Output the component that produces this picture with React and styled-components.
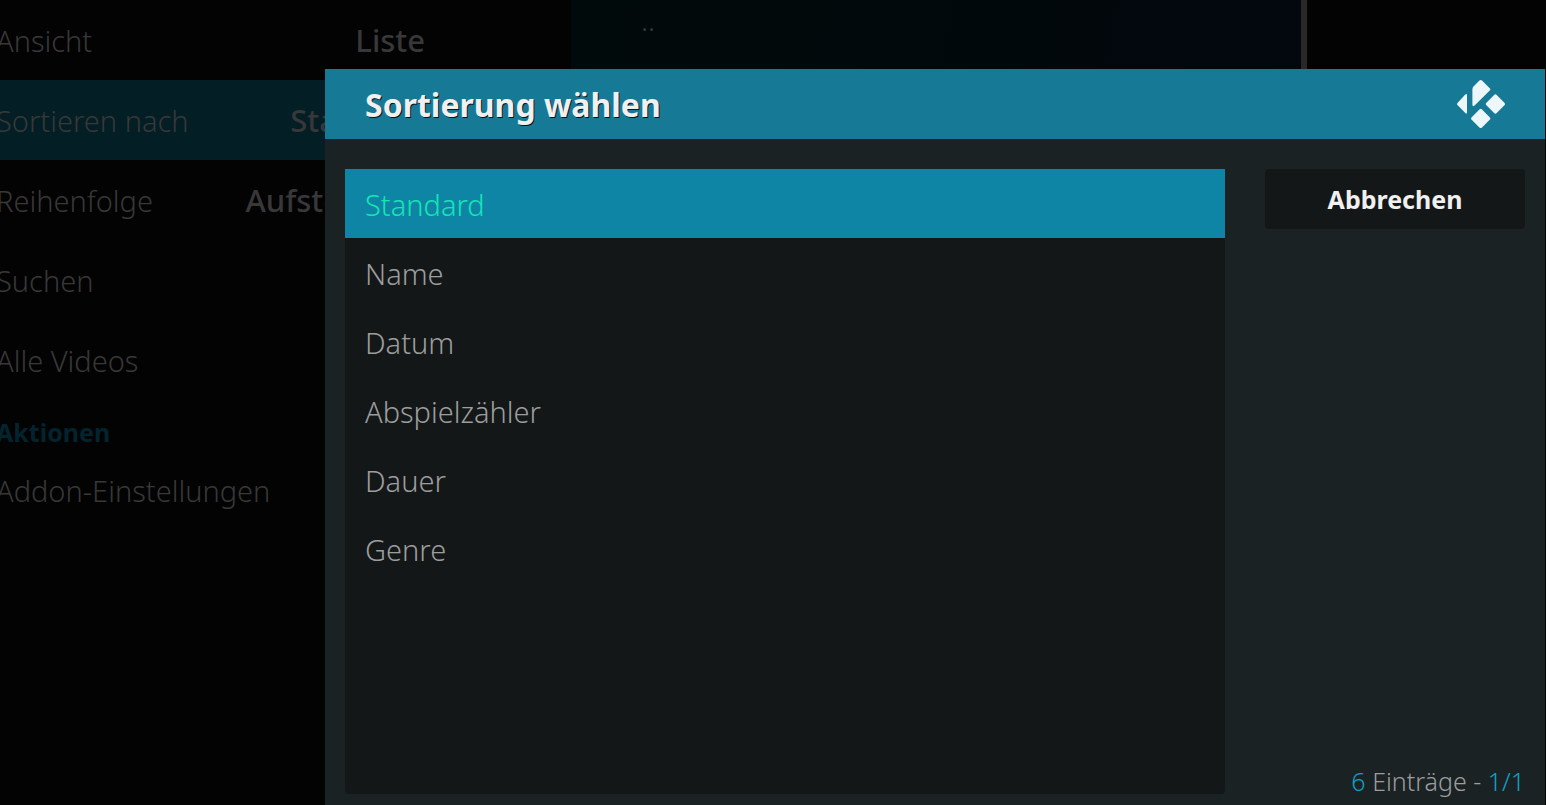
import React, { useState } from "react";
import styled, { createGlobalStyle, css } from "styled-components";

const GlobalStyle = createGlobalStyle`
  * {
    box-sizing: border-box;
  }

  body {
    margin: 0;
    background: #030303;
    font-family: "Noto Sans", sans-serif;
    overflow: hidden;
  }

  button {
    border: 0;
    font-family: inherit;
    cursor: pointer;
  }
`;

const Screen = styled.div`
  display: flex;
  min-height: 100vh;
  overflow: hidden;
`;

const Sidebar = styled.nav`
  flex: 0 0 469px;
  margin-left: -24px;
`;

const SidebarItem = styled.button`
  display: flex;
  justify-content: space-between;
  align-items: center;
  width: 100%;
  height: 80px;
  padding: 0 20px;
  background: ${({ $active }) => ($active ? "#031e25" : "transparent")};
  color: #383838;
  font-size: 29px;
  font-weight: 300;
`;

const SidebarValue = styled.span`
  font-size: 31px;
  font-weight: 500;
`;

const SidebarHeading = styled.h2`
  margin: 0;
  padding: 14px 20px 0;
  color: #03242f;
  font-size: 25px;
  font-weight: 700;
  line-height: 36px;
`;

const Media = styled.main`
  flex: 1;
  margin: 0 239px 0 126px;
  padding: 0 70px;
  border-right: 6px solid #282828;
  background: linear-gradient(100deg, #010a0b, #01080b 50%, #02070f);
  color: #383838;
  font-size: 29px;
  font-weight: 300;
  line-height: 40px;
`;

const Dialog = styled.section`
  position: fixed;
  top: 69px;
  right: 1px;
  bottom: 0;
  left: 325px;
  display: flex;
  flex-direction: column;
  background: #1b2223;
`;

const DialogHeader = styled.header`
  display: flex;
  justify-content: space-between;
  align-items: center;
  height: 70px;
  padding: 0 40px;
  background: #167a97;
`;

const DialogTitle = styled.h1`
  margin: 0;
  color: #f0f0f0;
  font-size: 32px;
  font-weight: 700;
  text-shadow: 1px 1px 0 #0b1316;
`;

const DialogBody = styled.div`
  display: flex;
  flex: 1;
  gap: 40px;
  padding: 30px 20px 11px;
`;

const OptionList = styled.div`
  flex: 1;
  border-radius: 4px;
  background: #141718;
`;

const Option = styled.button`
  display: block;
  width: 100%;
  height: 69px;
  padding: 2px 20px 0;
  background: transparent;
  color: #9c9d9d;
  font-size: 29px;
  font-weight: 300;
  text-align: left;

  ${({ $selected }) =>
    $selected &&
    css`
      background: #0f85a5;
      color: #14e6b4;
    `}
`;

const Actions = styled.aside`
  display: flex;
  flex: 0 0 260px;
  flex-direction: column;
  justify-content: space-between;
`;

const CancelButton = styled.button`
  height: 60px;
  border-radius: 4px;
  background: #141718;
  color: #f0f0f0;
  font-size: 25px;
  font-weight: 700;
`;

const Count = styled.p`
  margin: 0;
  color: #9c9d9d;
  font-size: 25px;
  font-weight: 300;
  line-height: 26px;
  text-align: right;
`;

const Accent = styled.span`
  color: #12a0c7;
`;

const KodiLogo = () => (
  <svg
    width="48"
    height="48"
    viewBox="0 0 48 48"
    fill="#edf6f9"
    aria-hidden="true"
  >
    <path d="M22.4 0.6Q23.7-0.6 25 0.6L32.7 8.2Q34 9.4 32.7 10.6L17.6 25.6Q15.4 27.3 15.4 24.6V9.2Q15.4 7.6 16.5 6.5Z" />
    <path d="M8.3 14.4Q10 13.2 10 15V32.4Q10 34.4 8.3 33L0.7 25.3Q-0.6 24 0.7 22.7Z" />
    <path d="M37.1 15Q38.4 13.7 39.7 15L47.4 22.7Q48.6 24 47.4 25.3L39.7 33Q38.4 34.3 37.1 33L29.4 25.3Q28.1 24 29.4 22.7Z" />
    <path d="M22.4 29.5Q23.7 28.2 25 29.5L32.7 37.2Q34 38.5 32.7 39.8L25 47.5Q23.7 48.7 22.4 47.5L14.7 39.8Q13.4 38.5 14.7 37.2Z" />
  </svg>
);

const options = ["Standard", "Name", "Datum", "Abspielzähler", "Dauer", "Genre"];

const viewSettings = [
  { label: "Ansicht", value: "Liste" },
  { label: "Sortieren nach", value: "Standard", active: true },
  { label: "Reihenfolge", value: "Aufsteigend" },
  { label: "Suchen" },
  { label: "Alle Videos" },
];

const SortDialog = () => {
  const [selected, setSelected] = useState("Standard");

  return (
    <Dialog role="dialog" aria-labelledby="sort-title">
      <DialogHeader>
        <DialogTitle id="sort-title">Sortierung wählen</DialogTitle>
        <KodiLogo />
      </DialogHeader>
      <DialogBody>
        <OptionList>
          {options.map((option) => (
            <Option
              key={option}
              type="button"
              $selected={option === selected}
              onClick={() => setSelected(option)}
            >
              {option}
            </Option>
          ))}
        </OptionList>
        <Actions>
          <CancelButton type="button">Abbrechen</CancelButton>
          <Count>
            <Accent>{options.length}</Accent> Einträge - <Accent>1/1</Accent>
          </Count>
        </Actions>
      </DialogBody>
    </Dialog>
  );
};

const App = () => {
  return (
    <>
      <GlobalStyle />
      <Screen>
        <Sidebar>
          {viewSettings.map(({ label, value, active }) => (
            <SidebarItem key={label} type="button" $active={active}>
              {label}
              {value && <SidebarValue>{value}</SidebarValue>}
            </SidebarItem>
          ))}
          <SidebarHeading>Aktionen</SidebarHeading>
          <SidebarItem type="button">Addon-Einstellungen</SidebarItem>
        </Sidebar>
        <Media>..</Media>
      </Screen>
      <SortDialog />
    </>
  );
};

export default App;
